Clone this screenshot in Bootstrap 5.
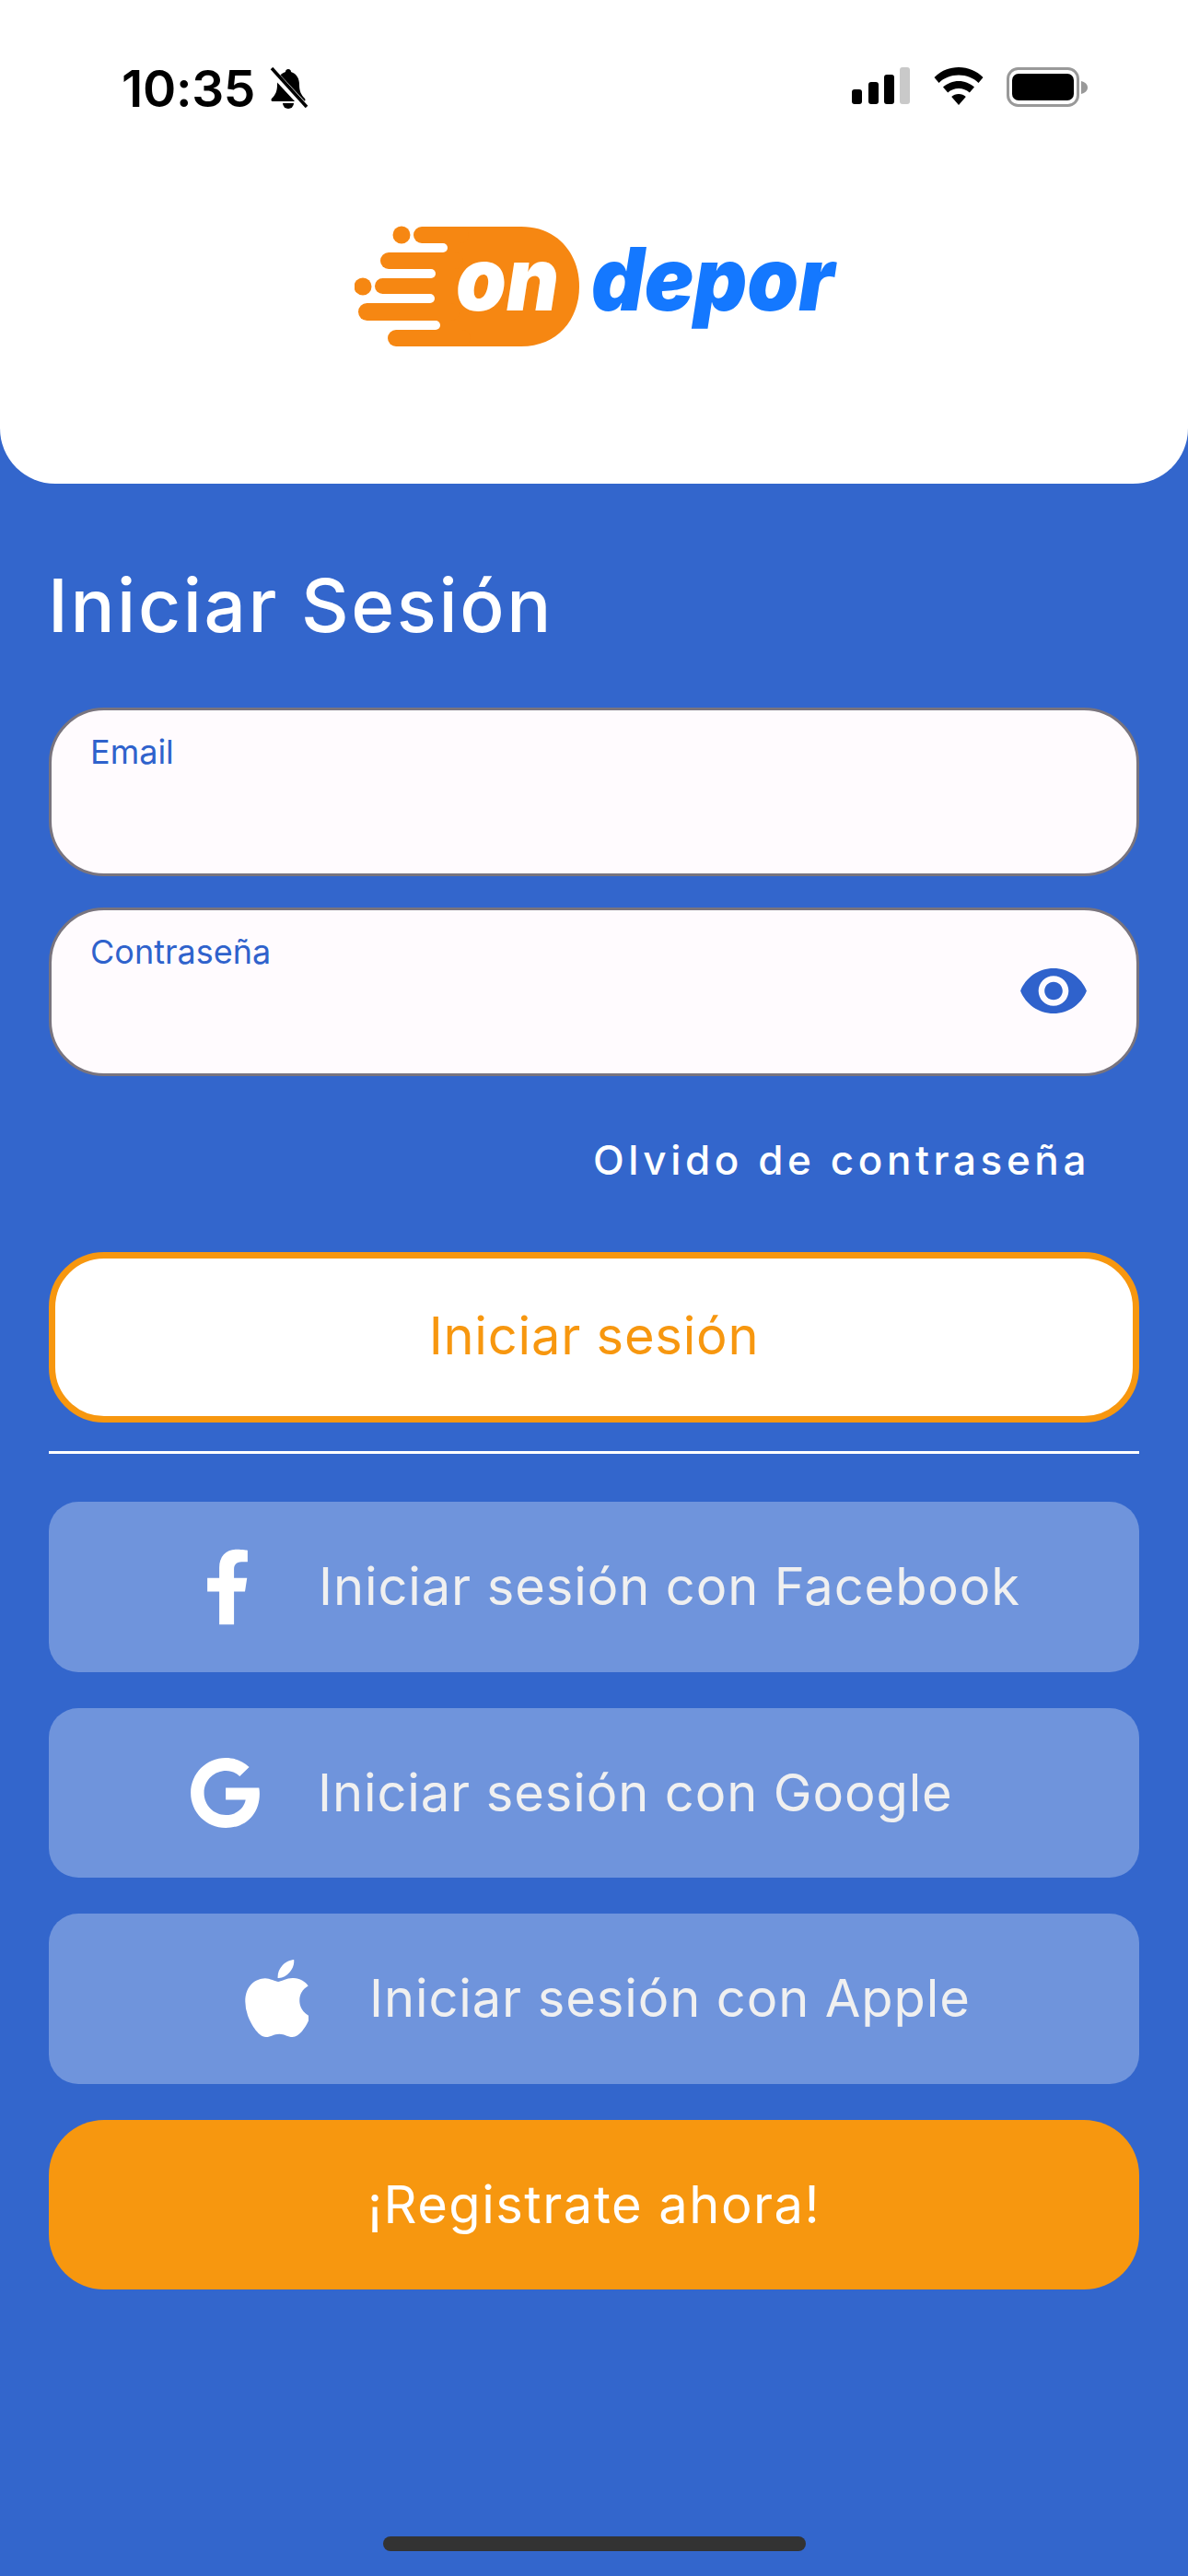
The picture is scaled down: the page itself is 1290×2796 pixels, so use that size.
<!DOCTYPE html>
<html lang="es">
<head>
<meta charset="utf-8">
<title>Iniciar Sesión</title>
<link href="https://cdn.jsdelivr.net/npm/bootstrap@5.3.0/dist/css/bootstrap.min.css" rel="stylesheet">
<style>
html,body{height:2796px;overflow:hidden}
body{background:#3366cc;font-family:"Inter","Liberation Sans",sans-serif;color:#fff}
.screen{height:2796px}
.top-panel{height:525px;background:#fff;border-radius:0 0 60px 60px}
.status-row{padding:73px 107px 0 132px;height:130px;color:#000}
.clock{font-size:55px;font-weight:600;line-height:52px;letter-spacing:-.3px;width:144px;margin-top:-3px}
.bell-ico{width:44px;height:46px;margin-left:15px}
.sig-ico{width:64px;height:42px}
.wifi-ico{width:54px;height:42px;margin-left:25px}
.bat-ico{width:90px;height:44px;margin-left:25px}
.logo-ico{display:block;width:600px;height:140px;margin:110px 0 0 385px}
.form-area{padding:0 53px}
.page-title{font-size:80px;font-weight:500;line-height:80px;margin:92px 0 71px -1px;letter-spacing:2.6px}
.field-box{height:183px;background:#fffbfe;border:3px solid #79747e;border-radius:60px;margin-bottom:34px;padding:0 42px}
.field-lbl{display:block;font-family:"Inter","Liberation Sans",sans-serif;font-size:36px;line-height:42px;color:#2f62cc;margin:24px 0 0 0}
.field-in{border:0;background:transparent;padding:0;height:80px;border-radius:0;box-shadow:none}
.eye-ico{width:72px;height:49px;margin-right:12px;flex:none;margin-top:-2px}
.forgot-row{font-size:44px;font-weight:500;letter-spacing:4.6px;line-height:54px;padding-right:53px;text-align:right;margin:64px 0 0}
.login-btn{height:185px;margin-top:73px;background:#fff;border:7px solid #f7970f;border-radius:60px;color:#f7970f;font-size:56px;font-weight:400;letter-spacing:.8px;padding-top:2px;padding-bottom:6px}
.split{height:3px;background:#fff;margin:31px 0 52px;opacity:1;border:0}
.social-btn{height:184.500px;background:#6f94dc;border:0;border-radius:32px;color:#f0f0f0;font-size:56px;font-weight:400;letter-spacing:.9px;margin-bottom:39px;padding:0;white-space:nowrap}
.fb-ico{width:44px;height:83px;margin-left:172px;margin-right:77px}
.g-ico{width:75px;height:76px;margin-left:154px;margin-right:63px}
.ap-ico{width:69px;height:84px;margin-left:213px;margin-right:66px}
.signup-btn{height:184.500px;background:#f7970f;border:0;border-radius:60px;color:#fff;font-size:56px;font-weight:400;letter-spacing:1.5px}
.home-bar{width:459px;height:16px;background:#333;border-radius:8px;margin:auto auto 27px}
</style>
</head>
<body>
<div class="screen d-flex flex-column">
  <header class="top-panel">
    <div class="status-row d-flex align-items-start">
      <span class="clock">10:35</span>
      <svg class="bell-ico" viewBox="0 0 44 46"><path d="M22 2c-2 0-3 1.400-3 3-6 2-9 7-9 14 0 7-2 11-6 15-1 1-.5 3 1 3h34c1.500 0 2-2 1-3-4-4-6-8-6-15 0-7-3-12-9-14 0-1.600-1-3-3-3z" fill="#000"/><path d="M16 39a6 6 0 0 0 12 0z" fill="#000"/><path d="M3 3l38 41" stroke="#fff" stroke-width="8"/><path d="M4 1l38 42" stroke="#000" stroke-width="3.500"/></svg>
      <span class="flex-grow-1"></span>
      <svg class="sig-ico" viewBox="0 0 64 42"><rect x="0" y="24" width="11" height="16" rx="3"/><rect x="18" y="16" width="11" height="24" rx="3"/><rect x="35" y="8" width="11" height="32" rx="3"/><rect x="52" y="0" width="11" height="40" rx="3" fill="#c9c9c9"/></svg>
      <svg class="wifi-ico" viewBox="0 0 54 42"><path d="M27 0C16.500 0 7.500 4 .5 11l5 6C11 11.500 18.500 8.500 27 8.500S43 11.500 48.500 17l5-6C46.500 4 37.500 0 27 0zM27 15c-6.500 0-12 2.500-17 6.500l5.200 6C18.500 24.500 22.500 23 27 23s8.500 1.500 11.800 4.500l5.200-6C39 17.500 33.500 15 27 15zM27 29c-3 0-5.700 1-7.800 3L27 41l7.800-9c-2.100-2-4.800-3-7.800-3z"/></svg>
      <svg class="bat-ico" viewBox="0 0 90 44"><rect x="1.500" y="1.500" width="76" height="40" rx="11" fill="none" stroke="#999" stroke-width="3"/><rect x="6" y="7" width="67" height="29" rx="7"/><path d="M81 15c4 1 7 3.500 7 7s-3 6-7 7z" fill="#999"/></svg>
    </div>
    <svg class="logo-ico" viewBox="385 240 600 140" role="img" aria-label="on depor">
      <path d="M460 246H566C605 246 629 275 629 311S605 376 566 376H460Z" fill="#f68712"/>
      <g fill="#fff">
        <rect x="440" y="264" width="46" height="10" rx="5"/>
        <rect x="440" y="292" width="33" height="10" rx="5"/>
        <rect x="440" y="319" width="32" height="10" rx="5"/>
        <rect x="440" y="348" width="38" height="10" rx="5"/>
      </g>
      <g fill="#f68712">
        <rect x="449" y="246" width="60" height="18" rx="9"/>
        <rect x="413" y="274" width="90" height="18" rx="9"/>
        <rect x="407" y="302" width="90" height="17" rx="8.500"/>
        <rect x="389" y="329" width="110" height="19" rx="9.500"/>
        <rect x="421" y="358" width="90" height="18" rx="9"/>
        <circle cx="436" cy="255" r="9.500"/>
        <circle cx="394" cy="311" r="9.500"/>
      </g>
      <g font-family="Inter, 'Liberation Sans', sans-serif" font-weight="900" font-style="italic" font-size="95">
        <text x="495" y="337" fill="#fff" textLength="112" lengthAdjust="spacingAndGlyphs">on</text>
        <text x="642" y="337" fill="#1478ff" textLength="264" lengthAdjust="spacingAndGlyphs">depor</text>
      </g>
    </svg>
  </header>
  <main class="form-area">
    <h1 class="page-title">Iniciar Sesión</h1>
    <div class="field-box">
      <label class="field-lbl" for="em">Email</label>
      <input class="form-control field-in" id="em" type="email">
    </div>
    <div class="field-box d-flex align-items-center mb-0">
      <div class="flex-grow-1 align-self-start">
        <label class="field-lbl" for="pw">Contraseña</label>
        <input class="form-control field-in" id="pw" type="password">
      </div>
      <svg class="eye-ico" viewBox="1 4.500 22 15"><path fill="#2f62cc" d="M12 4.500C7 4.500 2.730 7.610 1 12c1.730 4.390 6 7.500 11 7.500s9.270-3.110 11-7.500c-1.730-4.390-6-7.500-11-7.500zM12 17c-2.760 0-5-2.240-5-5s2.240-5 5-5 5 2.240 5 5-2.240 5-5 5zm0-8c-1.660 0-3 1.340-3 3s1.340 3 3 3 3-1.340 3-3-1.340-3-3-3z"/></svg>
    </div>
    <div class="forgot-row">Olvido de contraseña</div>
    <button class="btn login-btn w-100 d-block" type="button">Iniciar sesión</button>
    <hr class="split">
    <button class="btn social-btn w-100 d-flex align-items-center" type="button">
      <svg class="fb-ico" viewBox="22 0 276 512"><path fill="#fff" d="M279.140 288l14.220-92.660h-88.910v-60.130c0-25.350 12.420-50.060 52.240-50.060h40.420V6.260S260.430 0 225.360 0c-73.220 0-121.080 44.380-121.080 124.720v70.620H22.890V288h81.390v224h100.170V288z"/></svg>
      <span>Iniciar sesión con Facebook</span>
    </button>
    <button class="btn social-btn w-100 d-flex align-items-center" type="button">
      <svg class="g-ico" viewBox="0 8 488 496"><path fill="#fff" d="M488 261.800C488 403.300 391.100 504 248 504 110.800 504 0 393.200 0 256S110.800 8 248 8c66.800 0 123 24.500 166.300 64.900l-67.500 64.900C258.500 52.600 94.300 116.600 94.300 256c0 86.500 69.100 156.600 153.700 156.600 98.200 0 135-70.400 140.800-106.900H248v-85.300h236.100c2.300 12.700 3.900 24.900 3.900 41.400z"/></svg>
      <span>Iniciar sesión con Google</span>
    </button>
    <button class="btn social-btn w-100 d-flex align-items-center" type="button">
      <svg class="ap-ico" viewBox="4 32 365 448"><path fill="#fff" d="M318.700 268.700c-.2-36.700 16.400-64.400 50-84.800-18.800-26.900-47.200-41.700-84.700-44.600-35.500-2.800-74.300 20.700-88.500 20.700-15 0-49.400-19.700-76.400-19.700C63.300 141.200 4 184.800 4 273.500q0 39.300 14.400 81.200c12.800 36.700 59 126.700 107.200 125.200 25.200-.6 43-17.900 75.800-17.900 31.800 0 48.300 17.900 76.400 17.900 48.600-.7 90.400-82.500 102.600-119.300-65.200-30.700-61.700-90-61.700-91.900zm-56.600-164.200c27.300-32.400 24.800-61.900 24-72.500-24.100 1.400-52 16.400-67.900 34.900-17.500 19.800-27.800 44.300-25.600 71.900 26.100 2 49.900-11.400 69.500-34.300z"/></svg>
      <span>Iniciar sesión con Apple</span>
    </button>
    <button class="btn signup-btn w-100 d-block" type="button">¡Registrate ahora!</button>
  </main>
  <div class="home-bar"></div>
</div>
<script src="https://cdn.jsdelivr.net/npm/bootstrap@5.3.0/dist/js/bootstrap.bundle.min.js"></script>
</body>
</html>
